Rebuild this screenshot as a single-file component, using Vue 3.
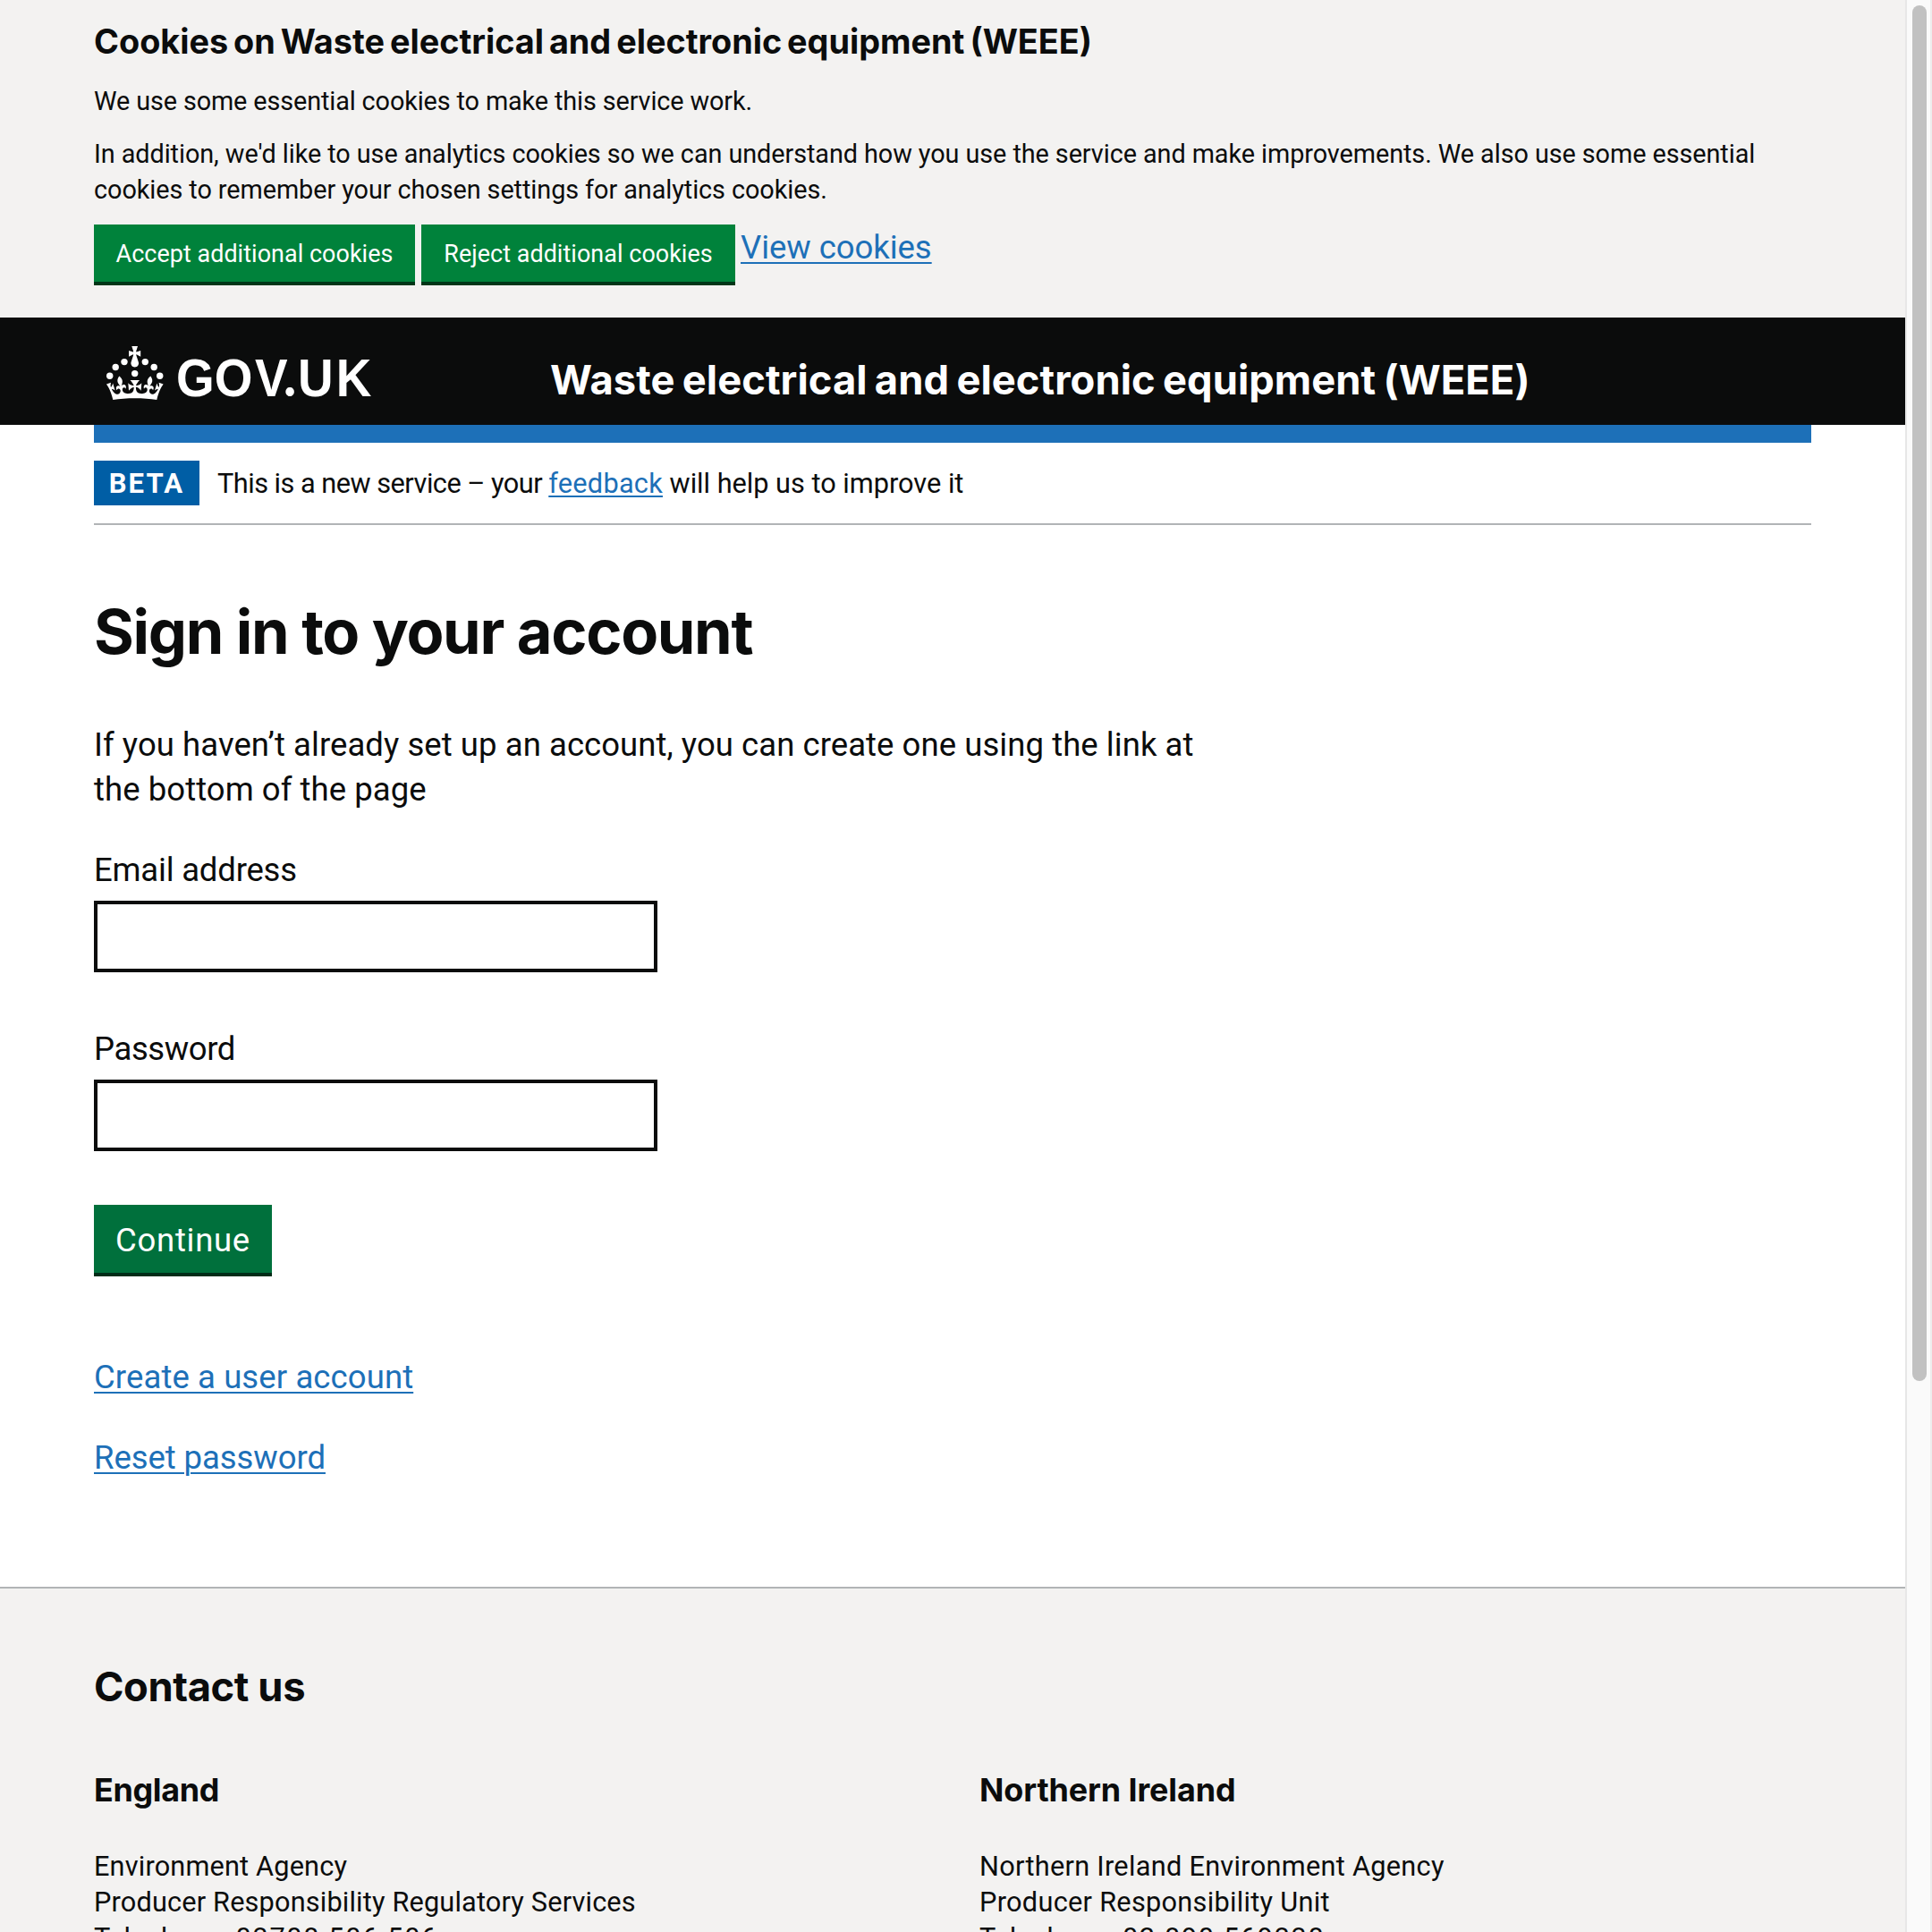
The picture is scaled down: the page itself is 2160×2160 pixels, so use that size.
<script setup>
const offices = [
  {
    name: 'England',
    key: 'england',
    lines: ['Environment Agency', 'Producer Responsibility Regulatory Services'],
    phone: '03708 506 506',
  },
  {
    name: 'Northern Ireland',
    key: 'ni',
    lines: ['Northern Ireland Environment Agency', 'Producer Responsibility Unit'],
    phone: '02 890 569338',
  },
]
</script>

<template>
  <div class="window">
    <div class="page">
      <section class="cookies">
        <h2 class="cookies-title">Cookies on Waste electrical and electronic equipment (WEEE)</h2>
        <p class="cookies-text short">We use some essential cookies to make this service work.</p>
        <p class="cookies-text">
          In addition, we'd like to use analytics cookies so we can understand how you use the service and make
          improvements. We also use some essential cookies to remember your chosen settings for analytics cookies.
        </p>
        <div class="cookies-actions">
          <button class="cookie-btn accept" type="button">Accept additional cookies</button>
          <button class="cookie-btn reject" type="button">Reject additional cookies</button>
          <a class="link view" href="#">View cookies</a>
        </div>
      </section>

      <header class="header">
        <svg class="logo" width="324" height="60" viewBox="0 0 324 60" fill="#fff" aria-label="GOV.UK">
          <circle cx="20" cy="17.6" r="3.7" />
          <circle cx="10.2" cy="23.5" r="3.7" />
          <circle cx="3.7" cy="33.2" r="3.7" />
          <circle cx="31.7" cy="30.6" r="3.7" />
          <circle cx="43.3" cy="17.6" r="3.7" />
          <circle cx="53.2" cy="23.5" r="3.7" />
          <circle cx="59.7" cy="33.2" r="3.7" />
          <path d="M33.1,9.8c.2-.1.3-.3.5-.5l4.6,2.4v-6.8l-4.6,1.5c-.1-.2-.3-.3-.5-.5l1.9-5.9h-6.7l1.9,5.9c-.2.1-.3.3-.5.5l-4.6-1.5v6.8l4.6-2.4c.1.2.3.3.5.5l-2.6,8c-.9,2.8,1.2,5.7,4.1,5.7h0c3,0,5.1-2.9,4.1-5.7l-2.6-8ZM37,37.9s-3.4,3.8-4.1,6.1c2.2,0,4.2-.5,6.4-2.8l-.7,8.5c-2-2.8-4.4-4.1-5.7-3.8.1,3.1.5,6.7,5.8,7.2,3.7.3,6.7-1.5,7-3.8.4-2.6-2-4.3-3.7-1.6-1.4-4.5,2.4-6.1,4.9-3.2-1.9-4.5-1.8-7.7,2.4-10.9,3,4,2.6,7.3-1.2,11.1,2.4-1.3,6.2,0,4,4.6-1.2-2.8-3.7-2.2-4.2.2-.3,1.7.7,3.7,3,4.2,1.9.3,4.7-.9,7-5.9-1.3,0-2.4.7-3.9,1.7l2.4-8c.6,2.3,1.4,3.7,2.2,4.5.6-1.6.5-2.8,0-5.3l5,1.8c-2.6,3.6-5.2,8.7-7.3,17.5-7.4-1.1-15.7-1.7-24.5-1.7h0c-8.8,0-17.1.6-24.5,1.7-2.1-8.9-4.7-13.9-7.3-17.5l5-1.8c-.5,2.5-.6,3.7,0,5.3.8-.8,1.6-2.3,2.2-4.5l2.4,8c-1.5-1-2.6-1.7-3.9-1.7,2.3,5,5.2,6.2,7,5.9,2.3-.4,3.3-2.4,3-4.2-.5-2.4-3-3.1-4.2-.2-2.2-4.6,1.6-6,4-4.6-3.7-3.7-4.2-7.1-1.2-11.1,4.2,3.2,4.3,6.4,2.4,10.9,2.5-2.8,6.3-1.3,4.9,3.2-1.8-2.7-4.1-1-3.7,1.6.3,2.3,3.3,4.1,7,3.8,5.4-.5,5.7-4.2,5.8-7.2-1.3-.2-3.7,1-5.7,3.8l-.7-8.5c2.2,2.3,4.2,2.7,6.4,2.8-.7-2.3-4.1-6.1-4.1-6.1h10.6,0Z" />
          <text class="wordmark" transform="scale(.93 1)" y="56" x="83.8 129.9 178.5">GOV<tspan class="dot" x="213.2">.</tspan><tspan x="230.2 276">UK</tspan></text>
        </svg>
        <span class="service">Waste electrical and electronic equipment (WEEE)</span>
      </header>

      <div class="container">
        <div class="bar"></div>
        <div class="phase">
          <strong class="tag">BETA</strong>
          <span class="phase-text"><span class="pre">This is a new service – your </span><a class="link feedback" href="#">feedback</a><span class="post"> will help us to improve it</span></span>
        </div>

        <main class="main">
          <h1>Sign in to your account</h1>
          <p class="intro">If you haven’t already set up an account, you can create one using the link at the bottom of the page</p>
          <div class="group">
            <label class="label email" for="email">Email address</label>
            <input id="email" class="input" type="text" />
          </div>
          <div class="group">
            <label class="label password" for="password">Password</label>
            <input id="password" class="input" type="password" />
          </div>
          <button class="continue" type="button">Continue</button>
          <nav class="links">
            <a class="link create" href="#">Create a user account</a>
            <a class="link reset" href="#">Reset password</a>
          </nav>
        </main>
      </div>

      <footer class="footer">
        <h2>Contact us</h2>
        <div class="offices">
          <section v-for="o in offices" :key="o.key" class="office" :class="o.key">
            <h3>{{ o.name }}</h3>
            <p v-for="l in o.lines" :key="l">{{ l }}</p>
            <p>Telephone: <span class="digits">{{ o.phone }}</span></p>
          </section>
        </div>
      </footer>
    </div>
    <div class="track"><div class="thumb"></div></div>
  </div>
</template>

<style>
body {
  overflow: hidden;
}
</style>

<style scoped>
.window {
  display: flex;
  width: 2160px;
  height: 2160px;
  overflow: hidden;
  background: #fff;
  color: #0b0c0c;
  font-family: Roboto, 'Liberation Sans', sans-serif;
}
.window * {
  box-sizing: border-box;
}
h1,
h2,
h3,
p {
  margin: 0;
}
h1,
h2,
h3,
.service {
  font-family: Inter, Roboto, sans-serif;
  font-weight: 700;
}
button {
  font-family: inherit;
  border: 0;
  padding: 0;
  color: #fff;
}
.page {
  flex: none;
  width: 2130px;
  height: 2160px;
  overflow: hidden;
}
.track {
  flex: 1;
  border-left: 2px solid #e7e7e7;
  border-right: 2px solid #ededed;
  background: #fafafa;
  padding: 6px 4px 0 6px;
}
.thumb {
  width: 16px;
  height: 1538px;
  border-radius: 8px;
  background: #c1c1c1;
}
.link {
  color: #1d70b8;
  text-decoration: underline;
  text-decoration-thickness: 2px;
  text-underline-offset: 4px;
}

/* Cookie banner */
.cookies {
  height: 355px;
  padding: 21px 105px 0;
  background: #f3f2f1;
}
.cookies-title {
  margin-bottom: 22px;
  font-size: 37.8px;
  line-height: 50px;
  letter-spacing: 0;
  word-spacing: -3px;
}
.cookies-text {
  margin-bottom: 19px;
  font-size: 28.8px;
  line-height: 40px;
  letter-spacing: -0.06px;
}
.cookies-text.short {
  letter-spacing: -0.11px;
}
.cookies-actions {
  display: flex;
  gap: 7px;
}
.cookie-btn {
  height: 68px;
  background: #00823b;
  border-bottom: 4px solid #003618;
  font-size: 26.9px;
  line-height: 67px;
  letter-spacing: 0.06px;
}
.accept {
  width: 359px;
}
.reject {
  width: 351px;
}
.view {
  margin-left: -1px;
  font-size: 36.5px;
  line-height: 52px;
  letter-spacing: -0.05px;
}

/* Header */
.header {
  display: flex;
  height: 120px;
  padding: 0 105px;
  background: #0b0c0c;
  color: #fff;
}
.logo {
  flex: none;
  margin: 32px 0 0 14px;
  overflow: visible;
}
.wordmark {
  font-family: 'Liberation Sans', sans-serif;
  font-weight: 700;
  font-size: 59px;
}
.dot {
  font-family: Lato, sans-serif;
  font-weight: 900;
  font-size: 62px;
}
.service {
  margin: 40px 0 0 172px;
  font-size: 45.3px;
  line-height: 60px;
  letter-spacing: 0.06px;
  word-spacing: -2.5px;
  white-space: nowrap;
}

/* Phase banner */
.container {
  padding: 0 105px;
}
.bar {
  height: 20px;
  background: #1d70b8;
}
.phase {
  display: flex;
  height: 92px;
  padding-top: 20px;
  border-bottom: 2px solid #b1b4b6;
  font-size: 30.7px;
}
.tag {
  width: 118px;
  height: 50px;
  background: #005ea5;
  color: #fff;
  font-size: 31px;
  line-height: 52px;
  letter-spacing: 2.2px;
  text-align: center;
}
.phase-text {
  margin-left: 20px;
  line-height: 52px;
  white-space: pre;
}
.pre {
  letter-spacing: -0.5px;
}
.feedback {
  letter-spacing: 0.25px;
  text-underline-offset: 3px;
}
.post {
  letter-spacing: 0;
}

/* Sign-in form */
.main {
  height: 1187px;
  padding-top: 82px;
  font-size: 36.5px;
  line-height: 50px;
}
h1 {
  margin-bottom: 64px;
  font-size: 68.5px;
  line-height: 75px;
  letter-spacing: -1.35px;
}
.intro {
  max-width: 1260px;
  margin-bottom: 40px;
  letter-spacing: 0.06px;
}
.group {
  margin-bottom: 60px;
}
.label {
  display: block;
  margin-bottom: 9px;
}
.group + .group .label {
  padding-top: 1px;
}
.email {
  letter-spacing: -0.2px;
}
.password {
  letter-spacing: -0.4px;
}
.input {
  display: block;
  width: 630px;
  height: 80px;
  border: 4px solid #0b0c0c;
  border-radius: 0;
  outline: 0;
  background: #fff;
}
.continue {
  display: block;
  width: 199px;
  height: 80px;
  background: #00703c;
  border-bottom: 4px solid #002d18;
  font-size: 36.5px;
  line-height: 80px;
  letter-spacing: 0.7px;
}
.links {
  display: flex;
  flex-direction: column;
  align-items: flex-start;
  gap: 40px;
  margin-top: 88px;
}
.create {
  letter-spacing: 0.1px;
}
.reset {
  letter-spacing: -0.07px;
}

/* Footer */
.footer {
  height: 500px;
  padding: 80px 105px 0;
  border-top: 2px solid #b1b4b6;
  background: #f3f2f1;
}
.footer h2 {
  font-size: 45.3px;
  line-height: 60px;
  letter-spacing: -0.4px;
}
.offices {
  display: flex;
  gap: 60px;
  margin-top: 60px;
}
.office {
  flex: 1;
  font-size: 30.7px;
  line-height: 40px;
  letter-spacing: 0.17px;
}
.office h3 {
  margin-bottom: 41px;
  font-size: 35.9px;
  line-height: 50px;
  letter-spacing: -0.35px;
}
.office.ni {
  letter-spacing: 0.29px;
}
.ni h3 {
  letter-spacing: -0.1px;
}
.digits {
  letter-spacing: 1.65px;
}
</style>
